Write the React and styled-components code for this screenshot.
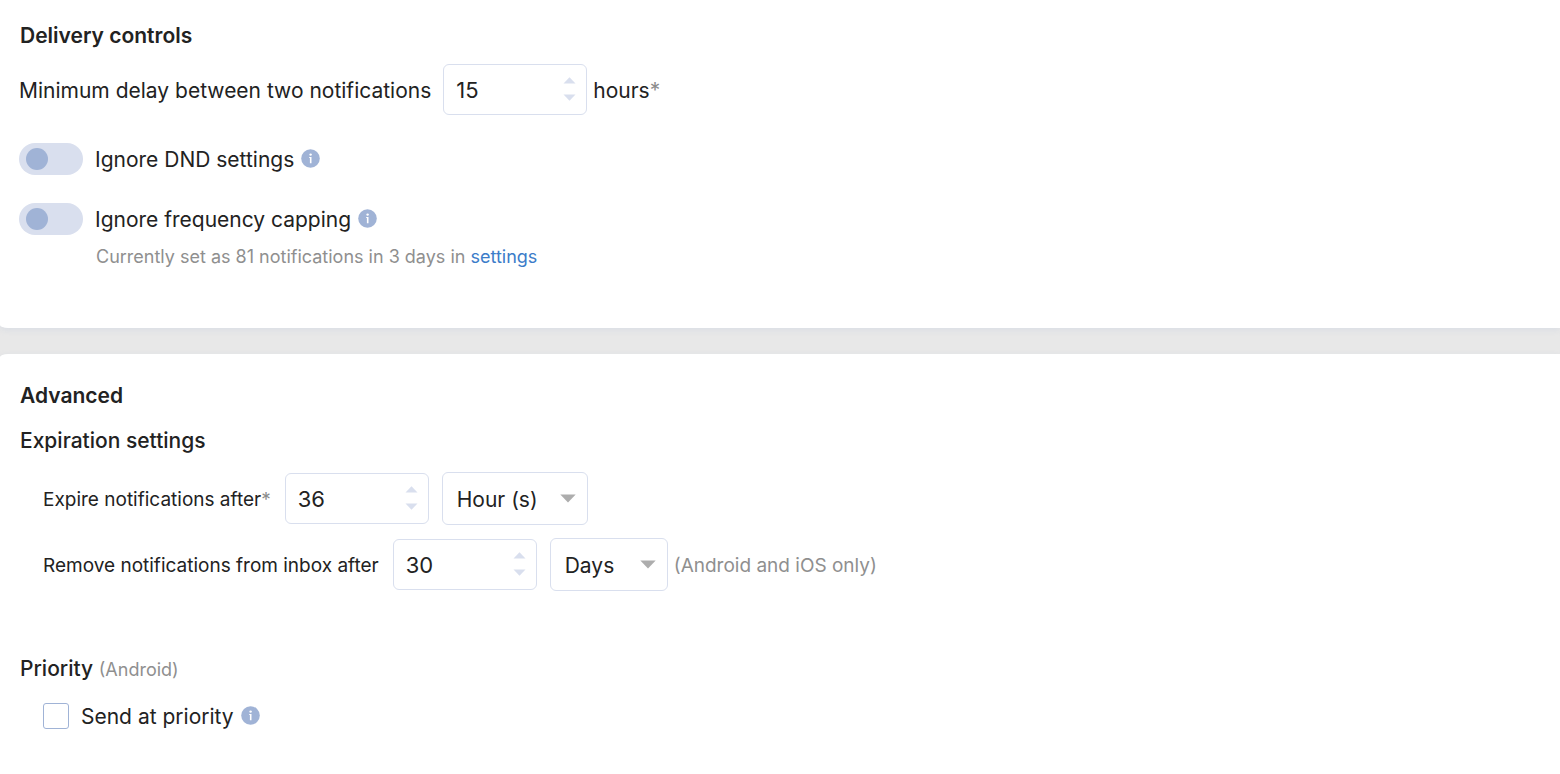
import { useState } from "react";
import styled, { createGlobalStyle } from "styled-components";

const GlobalStyle = createGlobalStyle`
    * {
        box-sizing: border-box;
    }
    body {
        margin: 0;
        background-color: #e8e8e8;
        color: #222222;
        font-family: Inter, "Liberation Sans", sans-serif;
        font-size: 21px;
        line-height: 28px;
    }
`;

const Page = styled.main`
    display: flex;
    flex-direction: column;
    gap: 26px;
    min-height: 100vh;
`;

const Panel = styled.section`
    padding: ${(props) => (props.$first ? "22px 20px 57px 19px" : "28px 20px 44px 19px")};
    background-color: white;
    border-top-left-radius: ${(props) => (props.$first ? "0" : "8px 3px")};
    border-bottom-left-radius: ${(props) => (props.$first ? "8px 3px" : "0")};
    box-shadow: 0 2px 6px rgba(160, 179, 214, 0.2);
    flex-grow: ${(props) => (props.$first ? 0 : 1)};
`;

const Title = styled.h2`
    margin: 0;
    padding-left: 1px;
    font-size: 21px;
    font-weight: 600;
`;

const SubTitle = styled.h3`
    margin: ${(props) => props.$top}px 0 0;
    padding-left: 1px;
    font-size: 21px;
    font-weight: 500;
`;

const Row = styled.div`
    display: flex;
    align-items: center;
    margin-top: ${(props) => props.$top}px;
    padding-left: ${(props) => (props.$indent ? 24 : 0)}px;
`;

const Label = styled.label`
    margin-right: ${(props) => (props.$wide ? 12 : 7)}px;
    padding-top: 2px;
`;

const SmallLabel = styled.label`
    margin-right: 14px;
    padding-top: 2px;
    font-size: 19px;
`;

const Unit = styled.span`
    margin-left: 6px;
    padding-top: 2px;
`;

const Star = styled.span`
    color: #8c8c8c;
`;

const NumberBox = styled.div`
    display: flex;
    align-items: center;
    width: 144px;
    height: 51px;
    padding: 0 10px 0 12px;
    border: 1px solid #d9dfee;
    border-radius: 6px;
    background-color: white;
`;

const NumberInput = styled.input`
    flex: 1;
    min-width: 0;
    padding: 0;
    border: none;
    outline: none;
    background: transparent;
    color: #222222;
    font-family: inherit;
    font-size: 22px;
    line-height: 28px;
    appearance: textfield;

    &::-webkit-inner-spin-button {
        appearance: none;
    }
`;

const Steppers = styled.div`
    display: flex;
    flex-direction: column;
    gap: 10px;
    padding-bottom: 1px;
`;

const StepButton = styled.button`
    display: block;
    padding: 0;
    border: none;
    background: transparent;
    line-height: 0;
    cursor: pointer;
`;

const SelectBox = styled.div`
    position: relative;
    width: ${(props) => props.$width}px;
    height: 53px;
    margin-left: 13px;
    margin-right: 6px;
`;

const Select = styled.select`
    width: 100%;
    height: 100%;
    padding: 2px 36px 0 14px;
    border: 1px solid #d9dfee;
    border-radius: 6px;
    background-color: white;
    color: #222222;
    font: inherit;
    appearance: none;
`;

const Caret = styled.svg`
    position: absolute;
    top: 22px;
    right: 12px;
    pointer-events: none;
`;

const Toggle = styled.input`
    display: flex;
    align-items: center;
    width: 64px;
    height: 32px;
    margin: 0 12px 0 0;
    padding: 0 7px;
    border-radius: 16px;
    background-color: #d9dfee;
    appearance: none;
    cursor: pointer;

    &::before {
        content: "";
        width: 22px;
        height: 22px;
        border-radius: 50%;
        background-color: #a0b3d6;
    }

    &:checked {
        justify-content: flex-end;
    }
`;

const Checkbox = styled.input`
    width: 26px;
    height: 26px;
    margin: 0 12px 0 0;
    border: 1px solid #a0b3d6;
    border-radius: 3px;
    background-color: white;
    appearance: none;
    cursor: pointer;

    &:checked {
        background-color: #a0b3d6;
    }
`;

const InfoButton = styled.button`
    display: flex;
    padding: 0;
    border: none;
    background: transparent;
    cursor: pointer;
`;

const Note = styled.p`
    margin: 8px 0 0 77px;
    color: #8f8f8f;
    font-size: 18px;
`;

const Muted = styled.span`
    padding-top: 2px;
    color: #8f8f8f;
    font-size: ${(props) => props.$size}px;
    font-weight: 400;
`;

const Link = styled.a`
    color: #3b7cc9;
    text-decoration: none;
`;

const Info = ({ about }) => (
    <InfoButton type="button" aria-label={`About ${about}`}>
        <svg width="19" height="20" viewBox="0 0 19 20">
            <circle cx="9.5" cy="9.5" r="9.3" fill="#a0b3d6" />
            <circle cx="9.6" cy="5.6" r="1.2" fill="white" />
            <path d="M8.2 8H10.5V14.2H8.9V9.1H8.2Z" fill="white" />
        </svg>
    </InfoButton>
);

const NumberField = ({ id, initial }) => {
    const [value, setValue] = useState(initial);
    return (
        <NumberBox>
            <NumberInput
                id={id}
                type="number"
                value={value}
                onChange={(e) => setValue(Number(e.target.value))}
            />
            <Steppers>
                <StepButton type="button" aria-label="Increase" onClick={() => setValue(value + 1)}>
                    <svg width="13" height="7" viewBox="0 0 13 7">
                        <path d="M0.5 6.5L6.5 0.3L12.5 6.5Z" fill="#d9dfee" />
                    </svg>
                </StepButton>
                <StepButton type="button" aria-label="Decrease" onClick={() => setValue(value - 1)}>
                    <svg width="13" height="7" viewBox="0 0 13 7">
                        <path d="M0.5 0.5L6.5 6.7L12.5 0.5Z" fill="#d9dfee" />
                    </svg>
                </StepButton>
            </Steppers>
        </NumberBox>
    );
};

const UnitSelect = ({ label, width, initial }) => (
    <SelectBox $width={width}>
        <Select aria-label={label} defaultValue={initial}>
            <option>Hour (s)</option>
            <option>Days</option>
        </Select>
        <Caret width="16" height="9" viewBox="0 0 16 9">
            <path d="M0.3 0.5H15.7L8 8.5Z" fill="#adadad" />
        </Caret>
    </SelectBox>
);

const App = () => {
    return (
        <>
            <GlobalStyle />
            <Page>
                <Panel $first>
                    <Title>Delivery controls</Title>
                    <Row $top={14}>
                        <Label htmlFor="delay" $wide>Minimum delay between two notifications</Label>
                        <NumberField id="delay" initial={15} />
                        <Unit>hours<Star>*</Star></Unit>
                    </Row>
                    <Row $top={28}>
                        <Toggle id="dnd" type="checkbox" role="switch" />
                        <Label htmlFor="dnd">Ignore DND settings</Label>
                        <Info about="DND settings" />
                    </Row>
                    <Row $top={28}>
                        <Toggle id="capping" type="checkbox" role="switch" />
                        <Label htmlFor="capping">Ignore frequency capping</Label>
                        <Info about="frequency capping" />
                    </Row>
                    <Note>
                        Currently set as 81 notifications in 3 days in <Link href="#settings">settings</Link>
                    </Note>
                </Panel>

                <Panel>
                    <Title>Advanced</Title>
                    <SubTitle $top={17}>Expiration settings</SubTitle>
                    <Row $top={17} $indent>
                        <SmallLabel htmlFor="expire">
                            Expire notifications after<Star>*</Star>
                        </SmallLabel>
                        <NumberField id="expire" initial={36} />
                        <UnitSelect label="Expiry unit" width={146} initial="Hour (s)" />
                    </Row>
                    <Row $top={13} $indent>
                        <SmallLabel htmlFor="remove">Remove notifications from inbox after</SmallLabel>
                        <NumberField id="remove" initial={30} />
                        <UnitSelect label="Inbox removal unit" width={118} initial="Days" />
                        <Muted $size={19}>(Android and iOS only)</Muted>
                    </Row>
                    <SubTitle $top={64}>
                        Priority <Muted $size={18}>(Android)</Muted>
                    </SubTitle>
                    <Row $top={17} $indent>
                        <Checkbox id="priority" type="checkbox" />
                        <Label htmlFor="priority">Send at priority</Label>
                        <Info about="priority" />
                    </Row>
                </Panel>
            </Page>
        </>
    );
};

export default App;
